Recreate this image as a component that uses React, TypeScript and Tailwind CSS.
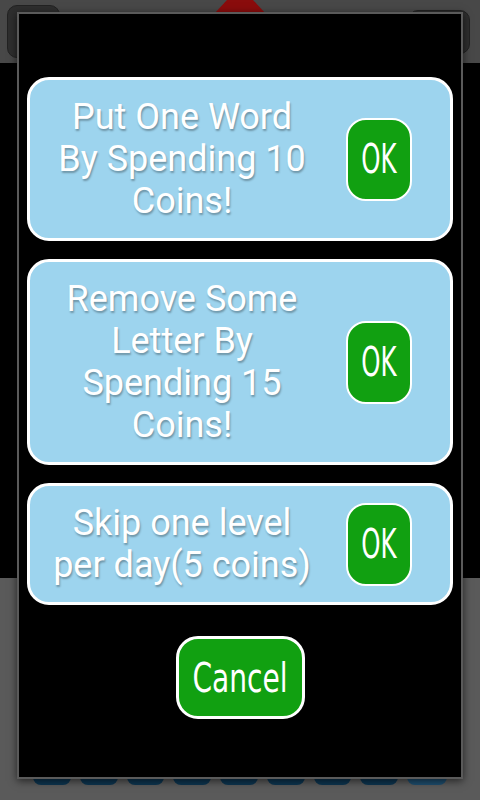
import React from "react";

const textFont = { fontFamily: "Roboto, 'Noto Sans', sans-serif" };
const btnFont = { fontFamily: "'DejaVu Sans Condensed', 'Liberation Sans Narrow', Roboto, sans-serif" };

function OkButton() {
  return (
    <div className="w-[66px] h-[83px] rounded-[20px] border-2 border-white bg-[#11a011] flex items-center justify-center shrink-0">
      <span className="text-white text-[40px] font-light leading-none scale-x-[0.68] inline-block" style={btnFont}>
        OK
      </span>
    </div>
  );
}

function Card({ lines }: { lines: string[] }) {
  return (
    <div className="rounded-[22px] border-[3px] border-white bg-[#9dd4ee] flex items-center py-[16px] pr-[38px]">
      <div
        className="w-[304px] text-center text-white text-[36px] leading-[42px] [text-shadow:1px_2px_2px_rgba(0,0,0,0.3)]"
        style={textFont}
      >
        {lines.map((l, i) => (
          <div key={i} className="whitespace-nowrap">{l}</div>
        ))}
      </div>
      <div className="flex-1 flex justify-end">
        <OkButton />
      </div>
    </div>
  );
}

export default function App() {
  return (
    <div className="relative w-[480px] h-[800px] overflow-hidden bg-black">
      {/* background app */}
      <div className="flex flex-col h-full">
        <div className="h-[63px] bg-[#484848] relative flex items-center justify-between px-[7px]">
          <div className="w-[53px] h-[53px] rounded-[10px] bg-[#2e2e2e] border border-[#222]" />
          <div className="absolute left-[214px] top-0 w-[52px] h-[14px] bg-[#8a0c0c] [clip-path:polygon(25%_0,75%_0,100%_100%,0_100%)]" />
          <div className="w-[62px] h-[44px] rounded-[10px] bg-[#2e2e2e] border border-[#222] mr-[3px]" />
        </div>
        <div className="h-[515px] bg-black" />
        <div className="flex-1 bg-[#5a5a5a] flex items-end gap-[9px] px-[33px] pb-[15px]">
          {Array.from({ length: 8 }).map((_, i) => (
            <div key={i} className="w-[38px] h-[12px] rounded-b-[8px] bg-[#0d3550]" />
          ))}
          <div className="w-[40px] h-[16px] rounded-b-[8px] bg-[#1e4d6e] ml-auto" />
        </div>
      </div>

      {/* dialog */}
      <div className="absolute left-[17px] top-[12px] w-[446px] h-[767px] bg-black border-2 border-[#5a5a5a] shadow-[0_2px_8px_rgba(0,0,0,0.6)] flex flex-col px-[8px] pt-[63px] gap-[18px]">
        <Card lines={["Put One Word", "By Spending 10", "Coins!"]} />
        <Card lines={["Remove Some", "Letter By", "Spending 15", "Coins!"]} />
        <Card lines={["Skip one level", "per day(5 coins)"]} />
        <div className="flex justify-center mt-[13px]">
          <div className="w-[129px] h-[83px] rounded-[22px] border-[3px] border-white bg-[#11a011] flex items-center justify-center">
            <span className="text-white text-[40px] font-light leading-none scale-x-[0.78] inline-block" style={btnFont}>
              Cancel
            </span>
          </div>
        </div>
      </div>
    </div>
  );
}
